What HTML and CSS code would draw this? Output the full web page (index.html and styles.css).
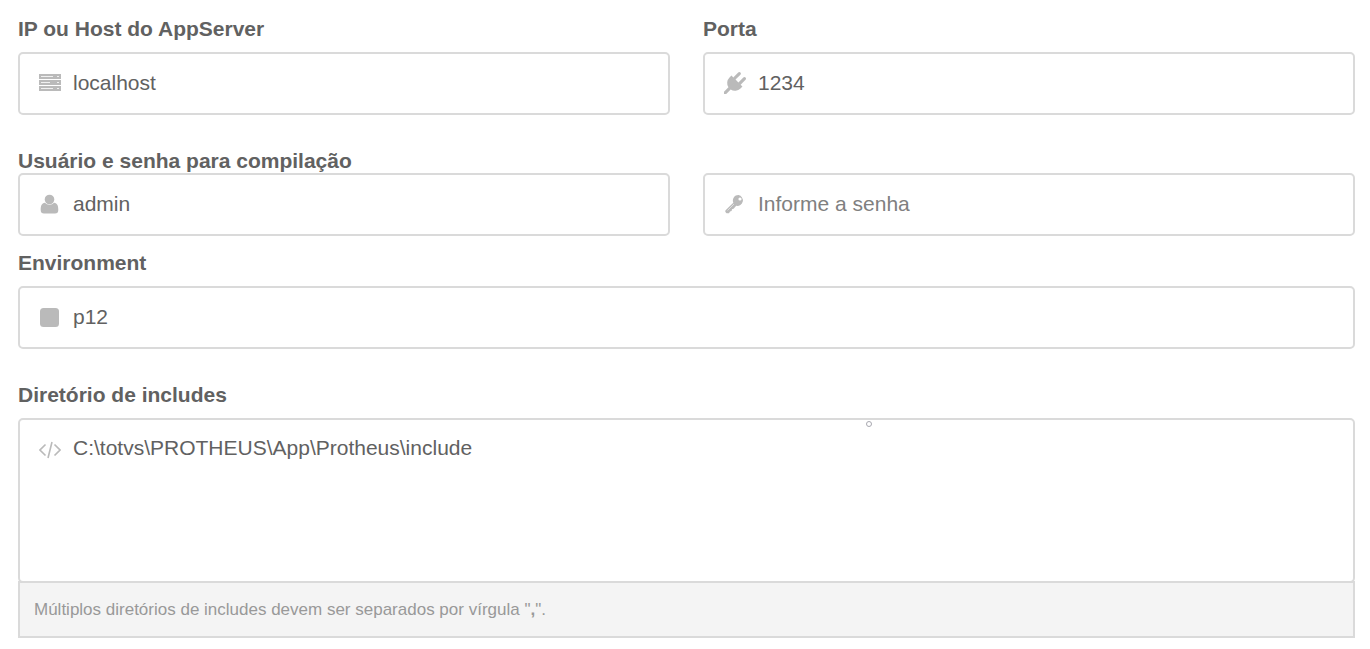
FILE: index.html
```html
<!DOCTYPE html>
<html lang="pt-BR">
<head>
    <meta charset="UTF-8">
    <meta name="viewport" content="width=device-width, initial-scale=1.0">
    <title>AppServer</title>
    <link rel="stylesheet" href="styles.css">
</head>
<body>
    <form class="server-form">
        <div class="row">
            <div class="field">
                <label for="host">IP ou Host do AppServer</label>
                <div class="input-box">
                    <svg class="icon" viewBox="0 0 22 22">
                        <path d="M0 2h22v5H0zM0 8h22v5H0zM0 14h22v5H0z"/>
                        <path class="slot" d="M2 4h12v1H2zM18 4h2v1h-2zM2 10h9v1H2zM18 10h2v1h-2zM2 16h12v1H2zM18 16h2v1h-2z"/>
                    </svg>
                    <input type="text" id="host" value="localhost">
                </div>
            </div>
            <div class="field">
                <label for="port">Porta</label>
                <div class="input-box">
                    <svg class="icon" viewBox="0 0 1792 1792">
                        <path d="M1755 453q37 38 37 90.500t-37 90.500l-401 400 150 150-160 160q-163 163-389.500 186.500t-411.500-100.500l-362 362h-181v-181l362-362q-124-185-100.500-411.500t186.500-389.500l160-160 150 150 400-401q38-37 91-37t90 37 37 90.500-37 90.500l-400 401 234 234 401-400q38-37 91-37t90 37z"/>
                    </svg>
                    <input type="text" id="port" value="1234">
                </div>
            </div>
        </div>

        <div class="row tight">
            <div class="field">
                <label for="user">Usuário e senha para compilação</label>
                <div class="input-box">
                    <svg class="icon" viewBox="0 0 22 22">
                        <circle cx="10.500" cy="6.500" r="4.800"/>
                        <path d="M6 9.800C8 12.300 13 12.300 15 9.800C18.500 10.300 19.300 13 19.300 17Q19.300 20.500 16 20.500H5Q1.700 20.500 1.700 17C1.700 13 2.500 10.300 6 9.800z"/>
                    </svg>
                    <input type="text" id="user" value="admin">
                </div>
            </div>
            <div class="field">
                <div class="input-box">
                    <svg class="icon" viewBox="0 0 22 22">
                        <path fill-rule="evenodd" d="M14.500 2A5.500 5.500 0 0 0 9.300 9.700L1.600 17.200Q1 18 1.400 19L2.500 20.300H5L6 18.500L7.600 18L8 16.300L9.600 15.800L12.200 12.800A5.500 5.500 0 1 0 14.500 2zM16 4.400a1.600 1.600 0 1 1 0 3.200a1.600 1.600 0 1 1 0-3.200z"/>
                        <path class="key-groove" d="M3.500 17.500L10 11"/>
                    </svg>
                    <input type="password" id="password" placeholder="Informe a senha" aria-label="Senha">
                </div>
            </div>
        </div>

        <div class="field">
            <label for="environment">Environment</label>
            <div class="input-box">
                <svg class="icon" viewBox="0 0 22 22">
                    <rect x="1" y="2" width="19" height="19" rx="3.500"/>
                </svg>
                <input type="text" id="environment" value="p12">
            </div>
        </div>

        <div class="field includes">
            <label for="includes">Diretório de includes</label>
            <div class="input-box area">
                <svg class="icon" viewBox="0 0 22 22">
                    <path class="stroke" d="M6.500 6.500L1 12L6.500 17.500M15.500 6.500L21 12L15.500 17.500M13 4L9 20"/>
                </svg>
                <textarea id="includes">C:\totvs\PROTHEUS\App\Protheus\include</textarea>
                <span class="marker"></span>
            </div>
            <div class="help">Múltiplos diretórios de includes devem ser separados por vírgula "<b>,</b>".</div>
        </div>
    </form>
</body>
</html>
```
FILE: styles.css
```css
* {
    box-sizing: border-box;
}

body {
    margin: 0;
    background-color: #fff;
    color: #616161;
    font-family: "Liberation Sans", Arial, sans-serif;
    font-size: 21px;
    line-height: 24px;
}

.server-form {
    padding: 17px 15px 11px 18px;
}

.row {
    display: flex;
    align-items: flex-end;
    gap: 33px;
    margin-bottom: 34px;
}

.row .field {
    flex: 1;
}

.row.tight {
    margin-bottom: 15px;
}

label {
    display: block;
    margin-bottom: 11px;
    font-weight: bold;
}

.tight label {
    margin-bottom: 0;
}

.input-box {
    position: relative;
    display: flex;
    align-items: center;
    gap: 12px;
    padding: 0 19px;
    background-color: #fff;
    border: 2px solid #dadada;
    border-radius: 5px;
}

.icon {
    flex: none;
    width: 22px;
    height: 22px;
    margin-bottom: 2px;
    fill: #bababa;
}

.slot {
    fill: #f0f0f0;
}

.stroke {
    fill: none;
    stroke: #bababa;
    stroke-width: 1.6;
}

.key-groove {
    fill: none;
    stroke: #dedede;
    stroke-width: 1;
}

input,
textarea {
    flex: 1;
    min-width: 0;
    padding: 17px 0 18px;
    border: none;
    outline: none;
    background: transparent;
    color: #616161;
    font: inherit;
}

input {
    height: 59px;
}

input::placeholder {
    color: #808080;
}

.includes {
    margin-top: 34px;
}

.area {
    align-items: flex-start;
}

.area .icon {
    margin-top: 18px;
}

textarea {
    display: block;
    height: 161px;
    padding-top: 16px;
    resize: none;
}

/* small ring over the top edge of the text area */
.marker {
    position: absolute;
    top: 1px;
    left: 63.5%;
    width: 6px;
    height: 6px;
    border: 1px solid #a8a8b0;
    border-radius: 50%;
}

.help {
    margin-top: -2px;
    padding: 15px 14px 14px;
    background-color: #f4f4f4;
    border: 2px solid #dadada;
    color: #999;
    font-size: 17px;
}
```
